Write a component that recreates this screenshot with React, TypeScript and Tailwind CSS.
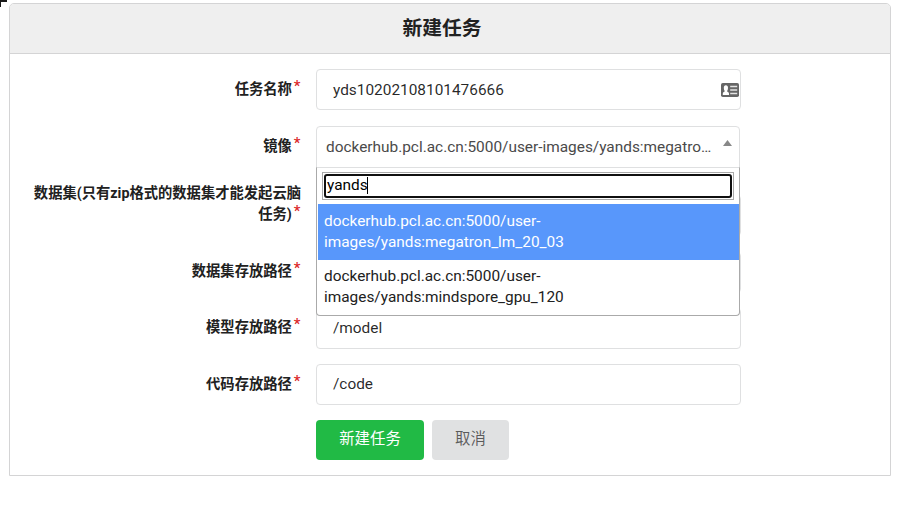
import type { ReactNode } from 'react';

function Label({ children, className = '' }: { children: ReactNode; className?: string }) {
  return (
    <label className={`w-[291px] shrink-0 text-right text-[14.3px] font-bold leading-[21px] ${className}`}>
      {children}
      <span className="relative top-[-3px] ml-[2px] mr-[0.5px] text-[15px] font-medium text-[#db2828]">*</span>
    </label>
  );
}

function Box({ children, className = '' }: { children?: ReactNode; className?: string }) {
  return (
    <div className={`flex h-[41px] w-[425px] items-center rounded-[4px] border border-[#dfe0e1] bg-white pl-4 text-[15.4px] text-black/85 ${className}`}>
      {children}
    </div>
  );
}

function IdCard() {
  return (
    <svg width="18" height="14" viewBox="0 0 18 14" className="mr-[1px] mb-[2px] ml-auto">
      <rect width="18" height="14" rx="1.8" fill="#666" />
      <path d="M1.8 12V10.5Q1.8 9.3 3.2 8.8L3.8 8.2Q2.8 7.1 2.8 5Q2.8 2.2 4.9 2.2Q7 2.2 7 5Q7 7.1 6 8.2L6.6 8.8Q8 9.3 8 10.5V12Z" fill="#fff" />
      <path d="M9.2 3.5H16.2M9.2 7H16.2M9.2 10.5H16.2" stroke="#e4e4e4" strokeWidth="1.5" />
    </svg>
  );
}

export default function App() {
  return (
    <main className="relative h-[509px] w-[897px] overflow-hidden bg-white pl-[9px] pt-[3px] font-[Roboto,'Noto_Sans_CJK_SC',sans-serif] text-[#212121]">
      <span className="absolute left-0 top-0 h-[7px] w-[7px] border-l border-t-2 border-[#1a1a1a]" />
      <section className="h-[473px] w-[882px] rounded-t-[5px] border border-[#d4d4d5]">
        <h1 className="flex h-[50px] items-center justify-center rounded-t-[4px] border-b border-[#d4d4d5] bg-[#efefef] pr-[16px] text-[19.8px] font-bold">
          新建任务
        </h1>
        <form className="pt-[15px]">
          <div className="mb-4 flex gap-[15px]">
            <Label className="pt-[10px]">任务名称</Label>
            <Box className="pt-[2px]">yds10202108101476666<IdCard /></Box>
          </div>
          <div className="mb-[16px] flex h-[41px] gap-[15px]">
            <Label className="pt-[10px]">镜像</Label>
            <div className="relative h-[41px] w-[424px]">
              <div className="flex h-[42px] items-center rounded-t-[4px] border border-[#dfe0e1] pl-[9px] pt-px text-[15.4px] text-[#4a4a4a]">
                <span>dockerhub.pcl.ac.cn:5000/user-images/yands:megatro…</span>
                <svg width="9" height="6" viewBox="0 0 9 6" className="mb-[10px] ml-auto mr-[7px]"><path d="M0 6L4.5 0 9 6Z" fill="#888" /></svg>
              </div>
              <div className="absolute left-0 top-[41px] z-10 h-[149px] w-[424px] rounded-b-[4px] border border-[#aaa] border-t-[#dfe0e1] bg-white text-[15.4px] leading-[21px]">
                <div className="ml-[5px] mt-1 h-[28px] w-[412px] border border-[#aaa] p-px">
                  <div className="flex h-6 items-center rounded-[3px] border-2 border-[#101010] pb-[2px] pl-px text-black">
                    yands<span className="-ml-px mt-px h-[17px] w-px bg-black" />
                  </div>
                </div>
                <div className="ml-px mt-1 h-[56px] bg-[#5897fb] px-[6px] pt-[7px] text-white">
                  dockerhub.pcl.ac.cn:5000/user-<br />images/yands:megatron_lm_20_03
                </div>
                <div className="ml-px px-[6px] pt-[6px]">
                  dockerhub.pcl.ac.cn:5000/user-<br />images/yands:mindspore_gpu_120
                </div>
              </div>
            </div>
          </div>
          <div className="mb-[15px] flex h-[54px] items-start gap-[15px]">
            <Label>数据集(只有zip格式的数据集才能发起云脑<br />任务)</Label>
            <div className="pt-3"><Box /></div>
          </div>
          <div className="mb-[15px] flex gap-[15px]">
            <Label className="pt-[9px]">数据集存放路径</Label>
            <Box />
          </div>
          <div className="mb-[15px] flex gap-[15px]">
            <Label className="pt-[9px]">模型存放路径</Label>
            <Box>/model</Box>
          </div>
          <div className="mb-[15px] flex gap-[15px]">
            <Label className="pt-[10px]">代码存放路径</Label>
            <Box>/code</Box>
          </div>
          <div className="ml-[306px] flex gap-2 text-[15.4px]">
            <button type="button" className="h-10 w-[108px] rounded-[4px] bg-[#21ba45] pb-px text-white">新建任务</button>
            <button type="button" className="h-10 w-[77px] rounded-[4px] bg-[#e0e1e2] pb-px text-black/60">取消</button>
          </div>
        </form>
      </section>
    </main>
  );
}
